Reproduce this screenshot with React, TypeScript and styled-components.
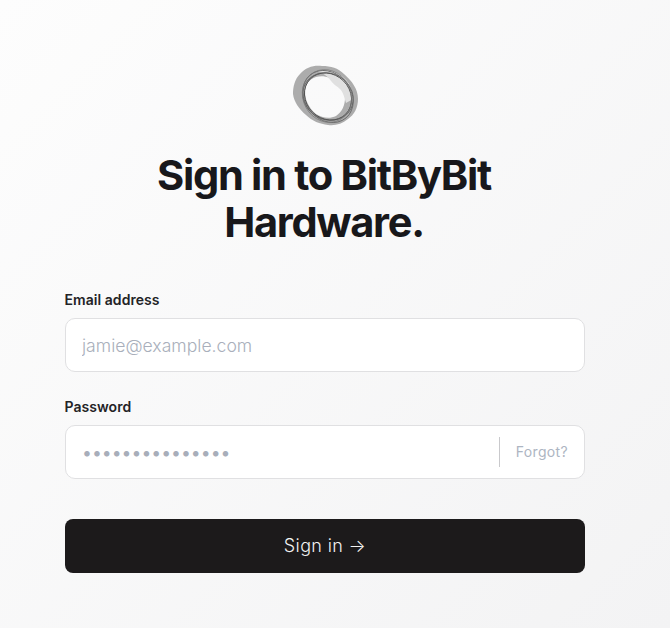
import styled, { createGlobalStyle } from "styled-components";

const GlobalStyle = createGlobalStyle`
  html, body {
    margin: 0;
    padding: 0;
    height: 100%;
  }
  body {
    font-family: Inter, "Liberation Sans", sans-serif;
    background: linear-gradient(135deg, #fdfdfd 0%, #f3f3f4 100%);
    min-height: 628px;
    overflow: hidden;
  }
`;

const Page = styled.main`
  width: 670px;
  height: 628px;
  box-sizing: border-box;
  padding: 65px 85px 0 65px;
`;

const Header = styled.header`
  display: flex;
  flex-direction: column;
  align-items: center;
`;

const Logo = styled.svg`
  display: block;
  width: 66px;
  height: 62px;
`;

const Title = styled.h1`
  margin: 25px 0 0;
  width: 400px;
  padding-right: 2px;
  font-size: 41.6px;
  line-height: 47px;
  font-weight: 700;
  letter-spacing: -1.3px;
  color: #18181b;
  text-align: center;
`;

const Form = styled.form`
  margin-top: 45px;
  display: flex;
  flex-direction: column;
`;

const Field = styled.div`
  display: flex;
  flex-direction: column;
  gap: 10px;
  margin-bottom: 26px;
`;

const Label = styled.label`
  font-size: 14px;
  line-height: 17px;
  font-weight: 600;
  letter-spacing: 0.05px;
  margin-left: -0.5px;
  color: #232326;
`;

const InputBox = styled.div`
  height: 54px;
  box-sizing: border-box;
  display: flex;
  align-items: center;
  background: #ffffff;
  border: 1px solid #e0e0e2;
  border-radius: 10px;
  padding: 0 16px;
`;

const Input = styled.input<{ $dots?: boolean }>`
  flex: 1;
  min-width: 0;
  border: 0;
  outline: 0;
  padding: 0;
  background: transparent;
  font-family: Inter, "Liberation Sans", sans-serif;
  font-size: 17.6px;
  font-weight: ${({ $dots }) => ($dots ? 400 : 300)};
  color: #18181b;

  &::placeholder {
    color: ${({ $dots }) => ($dots ? "#a8aeba" : "#a9afbb")};
    opacity: 1;
  }
`;

const Forgot = styled.a`
  align-self: center;
  height: 30px;
  box-sizing: border-box;
  display: flex;
  align-items: center;
  padding: 0 0 2px 16px;
  border-left: 1px solid #c9c9cc;
  font-size: 14px;
  font-weight: 400;
  letter-spacing: 0.35px;
  color: #adb5c2;
`;

const Submit = styled.button`
  margin-top: 14px;
  height: 54px;
  padding: 0 0 2px;
  border: 0;
  border-radius: 8px;
  background: #1c1a1b;
  color: #f2f2f2;
  font-family: Inter, "Liberation Sans", sans-serif;
  font-size: 18px;
  font-weight: 300;
  letter-spacing: 0.35px;
`;

export default function App() {
  return (
    <>
      <GlobalStyle />
      <Page>
        <Header>
          <Logo viewBox="0 0 66 62" fill="none" aria-label="BitByBit logo">
            <path
              fillRule="evenodd"
              d="M8 9 C14 2 22 0 30 1 C39 1 46 3 52 9 C60 16 66 24 66 34 C66 43 62 50 56 54 C50 59 43 61 36 60 C28 59 20 56 14 50 C7 44 2 37 1 29 C1 21 3 14 8 9 Z M24 12 C17 14 13 20 13 27 C13 35 17 43 24 49 C30 53 38 54 44 51 C50 47 53 40 53 33 C53 25 47 18 38 13 C33 11 28 11 24 12 Z"
              fill="#acacac"
            />
            <path
              d="M26 6 C36 4 45 7 51 12 C57 17 61 24 61 34 L54 38 C52 31 51 27 48 24 C45 21 42 20 39 16 C37 13 33 9 26 6 Z"
              fill="#e0e0e0"
            />
            <ellipse cx="36" cy="31.5" rx="25" ry="22" transform="rotate(45 36 31.5)" stroke="#4a4a4a" strokeWidth="0.9" />
            <ellipse cx="36" cy="31.5" rx="26" ry="23" transform="rotate(30 36 31.5)" stroke="#5c5c5c" strokeWidth="0.8" />
            <ellipse cx="36" cy="31.5" rx="28" ry="23" transform="rotate(50 36 31.5)" stroke="#686868" strokeWidth="0.9" />
            <ellipse cx="35" cy="31" rx="27" ry="24" transform="rotate(62 35 31)" stroke="#7a7a7a" strokeWidth="0.7" />
          </Logo>
          <Title>Sign in to BitByBit Hardware.</Title>
        </Header>
        <Form>
          <Field>
            <Label htmlFor="email">Email address</Label>
            <InputBox>
              <Input id="email" placeholder="jamie@example.com" />
            </InputBox>
          </Field>
          <Field>
            <Label htmlFor="password">Password</Label>
            <InputBox>
              <Input id="password" $dots placeholder="•••••••••••••••" />
              <Forgot>Forgot?</Forgot>
            </InputBox>
          </Field>
          <Submit type="button">Sign in →</Submit>
        </Form>
      </Page>
    </>
  );
}
